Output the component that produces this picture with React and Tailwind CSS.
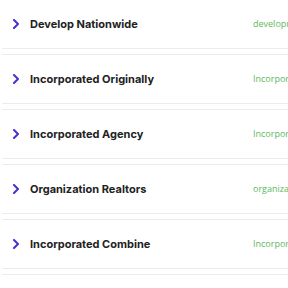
const ITEMS = [
  { title: "Develop Nationwide", slug: "development-nationwide" },
  { title: "Incorporated Originally", slug: "Incorporated-originally" },
  { title: "Incorporated Agency", slug: "Incorporated-agency" },
  { title: "Organization Realtors", slug: "organization-realtors" },
  { title: "Incorporated Combine", slug: "Incorporated-combine" },
];

function Chevron() {
  return (
    <svg width="8" height="10" viewBox="0 0 8 10" className="shrink-0">
      <polyline
        points="2,1 6,5 2,9"
        fill="none"
        stroke="#4a2fd0"
        strokeWidth="2"
        strokeLinecap="round"
        strokeLinejoin="round"
      />
    </svg>
  );
}

export default function App() {
  return (
    <div className="w-[288px] h-[288px] overflow-hidden bg-white">
      <div className="-mt-px pl-[2px]">
        {ITEMS.map((it, i) => (
          <div
            key={i}
            className="h-[50px] mb-[5px] border-y border-[#ececec] flex items-center whitespace-nowrap overflow-hidden"
          >
            <div className="pl-[10px] w-[28px] shrink-0">
              <Chevron />
            </div>
            <span
              className="w-[223px] shrink-0 text-[11px] font-bold text-[#222]"
              style={{ fontFamily: "Inter, 'Noto Sans', sans-serif" }}
            >
              {it.title}
            </span>
            <span
              className="shrink-0 text-[9px] text-[#5cb85c]"
              style={{ fontFamily: "'Open Sans', sans-serif" }}
            >
              {it.slug}
            </span>
          </div>
        ))}
        <div className="h-[14px] border-t border-[#ececec]" />
      </div>
    </div>
  );
}
